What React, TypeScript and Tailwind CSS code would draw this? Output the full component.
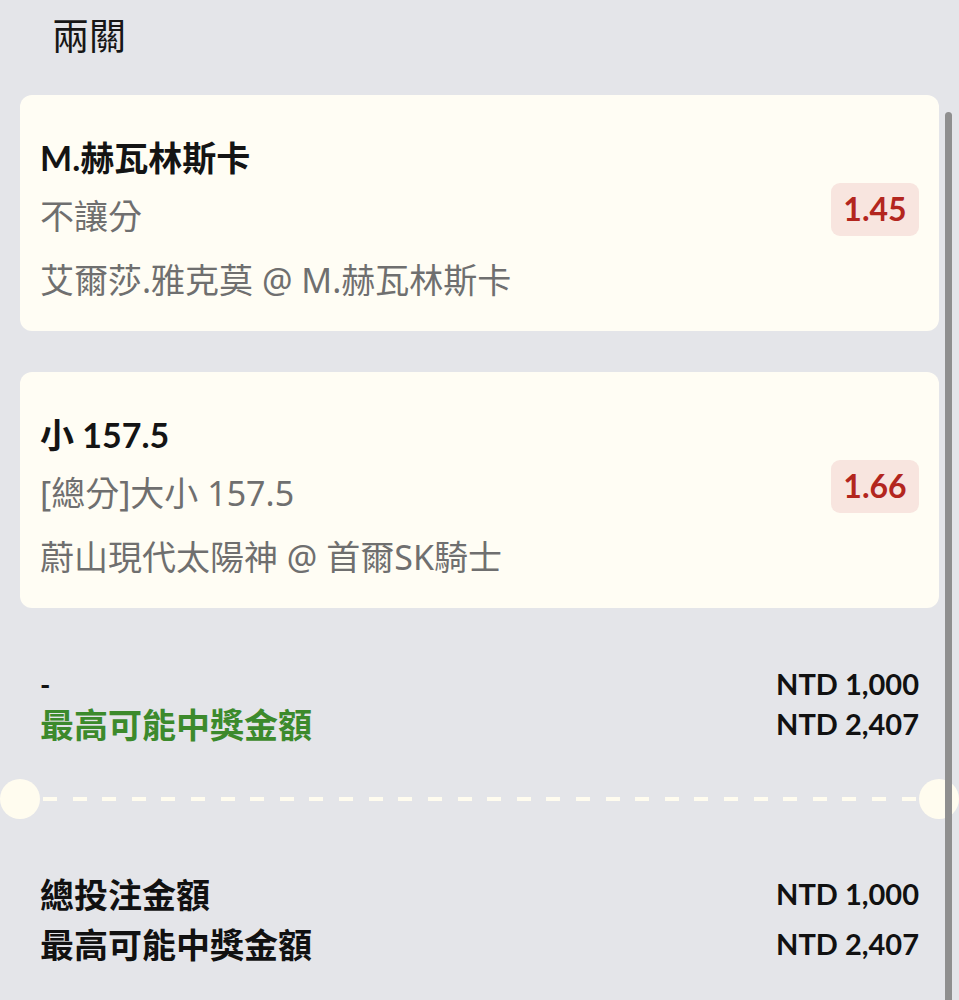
import type { ReactNode } from "react";

type Leg = {
  pick: string;
  market: string;
  match: string;
  odds: string;
};

const legs: Leg[] = [
  {
    pick: "M.赫瓦林斯卡",
    market: "不讓分",
    match: "艾爾莎.雅克莫 @ M.赫瓦林斯卡",
    odds: "1.45",
  },
  {
    pick: "小 157.5",
    market: "[總分]大小 157.5",
    match: "蔚山現代太陽神 @ 首爾SK騎士",
    odds: "1.66",
  },
];

function LegCard({ leg }: { leg: Leg }) {
  return (
    <div className="flex items-center justify-between rounded-[12px] bg-[#fffdf4] px-5 pb-[29px] pt-[41px]">
      <div>
        <p className="text-[34px] font-bold leading-[44px] text-[#141414]">{leg.pick}</p>
        <div className="font-['Noto_Sans','Noto_Sans_CJK_TC',sans-serif] text-[34px] leading-[44px] text-[#6f6f6f]">
          <p className="mt-[14px]">{leg.market}</p>
          <p className="mt-[20px]">{leg.match}</p>
        </div>
      </div>
      <span className="mb-[20px] flex h-[53px] w-[88px] items-center justify-center rounded-[9px] bg-[#f8e5df] text-[32px] font-bold text-[#b3261e]">
        {leg.odds}
      </span>
    </div>
  );
}

function AmountRow({
  label,
  amount,
  className,
}: {
  label: ReactNode;
  amount: string;
  className: string;
}) {
  return (
    <div className={`flex items-center justify-between ${className}`}>
      {label}
      <span className="text-[29px] font-bold text-[#111]">{amount}</span>
    </div>
  );
}

export default function App() {
  return (
    <div className="relative min-h-screen overflow-hidden bg-[#e4e5e9] px-5 pt-[10px] font-['Lato','Noto_Sans_CJK_TC',sans-serif]">
      <h1 className="pl-8 text-[37px] leading-[52px] text-[#161616]">兩關</h1>

      <div className="mt-[33px] flex flex-col gap-[41px]">
        {legs.map((leg) => (
          <LegCard key={leg.odds} leg={leg} />
        ))}
      </div>

      <div className="mt-[56px] px-5">
        <AmountRow
          className="h-[40px]"
          label={<span className="text-[28px] font-bold text-[#111]">-</span>}
          amount="NTD 1,000"
        />
        <AmountRow
          className="h-[40px]"
          label={<span className="text-[34px] font-bold text-[#3c8a2c]">最高可能中獎金額</span>}
          amount="NTD 2,407"
        />
      </div>

      {/* ticket cut line */}
      <div className="-mx-5 mt-[35px] flex items-center">
        <div className="h-10 w-10 shrink-0 rounded-full bg-[#fffcef]" />
        <div className="flex flex-1 justify-between px-[3px]">
          {Array.from({ length: 30 }).map((_, i) => (
            <span key={i} className="h-[4px] w-[14px] bg-[#fffcef]" />
          ))}
        </div>
        <div className="h-10 w-10 shrink-0 rounded-full bg-[#fffcef]" />
      </div>

      <div className="mt-[50px] px-5">
        <AmountRow
          className="h-[50px]"
          label={<span className="text-[34px] font-bold text-[#111]">總投注金額</span>}
          amount="NTD 1,000"
        />
        <AmountRow
          className="h-[50px]"
          label={<span className="text-[34px] font-bold text-[#111]">最高可能中獎金額</span>}
          amount="NTD 2,407"
        />
      </div>

      <div className="absolute bottom-0 right-[7px] top-[112px] w-[7px] rounded-t-full bg-[#8f8f8f]" />
    </div>
  );
}
